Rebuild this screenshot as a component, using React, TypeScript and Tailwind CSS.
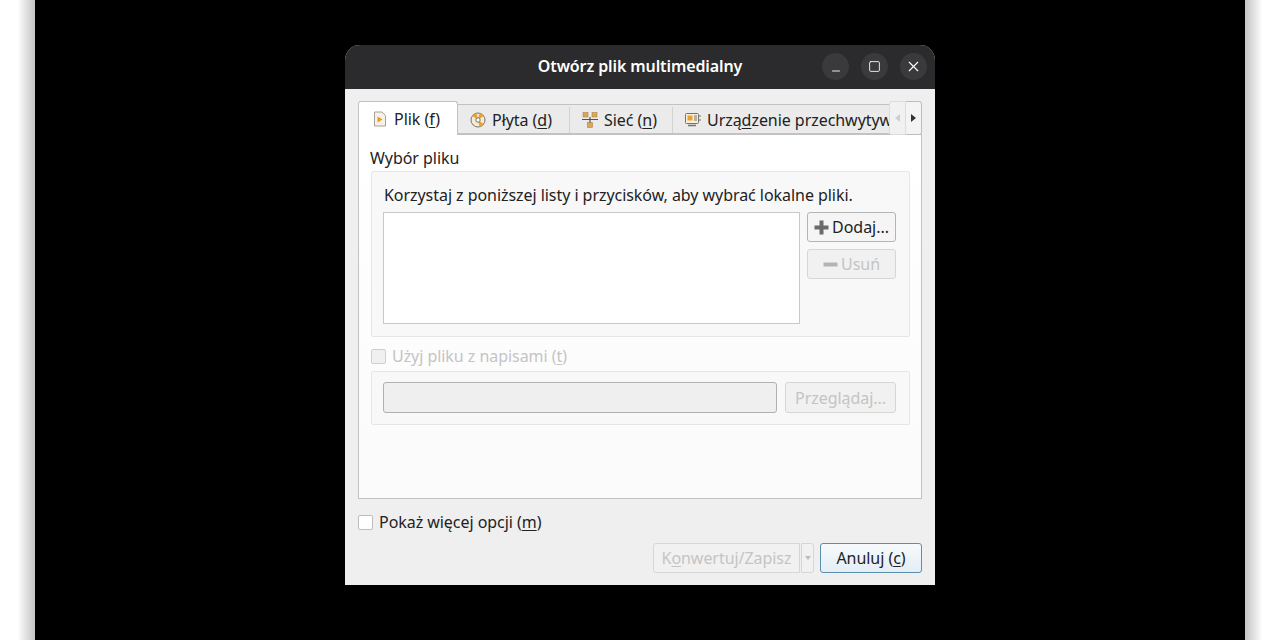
import React from 'react';
import { Minus as MinimizeIcon, Square, X } from 'lucide-react';

const FileIcon = () => (
  <svg width="15" height="16" viewBox="0 0 15 16" className="shrink-0">
    <path d="M1.5 1h7.5l3.5 3.5V15h-11z" fill="#f6f1e6" stroke="#a8a296" />
    <path d="M4.5 5.5l5 3-5 3z" fill="#e8991f" />
  </svg>
);

const DiscIcon = () => (
  <svg width="16" height="16" viewBox="0 0 16 16" className="shrink-0">
    <circle cx="8" cy="8" r="7" fill="#f6ead2" stroke="#77716a" />
    <path d="M8 8L2.5 4A7 7 0 0 1 6.5 1.2zM8 8l5.5 4A7 7 0 0 1 9.5 14.8z" fill="#e8a32e" />
    <path d="M8 8L13.5 4A7 7 0 0 0 9.5 1.2z" fill="#e8a32e" />
    <circle cx="8" cy="8" r="2.2" fill="#fff" stroke="#77716a" />
  </svg>
);

const NetworkIcon = () => (
  <svg width="16" height="16" viewBox="0 0 16 16" className="shrink-0">
    <rect x="1" y="0.5" width="5" height="4.5" fill="#dda653" stroke="#a5793a" strokeWidth="0.5" />
    <rect x="10" y="0.5" width="5" height="4.5" fill="#dda653" stroke="#a5793a" strokeWidth="0.5" />
    <rect x="5.5" y="10.5" width="5" height="5" fill="#dda653" stroke="#a5793a" strokeWidth="0.5" />
    <path d="M0 7.5h16M8 5v5.5" stroke="#55524c" strokeWidth="1.2" />
  </svg>
);

const CaptureIcon = () => (
  <svg width="16" height="16" viewBox="0 0 16 16" className="shrink-0">
    <rect x="0.5" y="1.5" width="13" height="10" rx="1" fill="#f7efdc" stroke="#77716a" />
    <rect x="2.5" y="3.5" width="5" height="5" fill="#e8a32e" />
    <path d="M9 4h3M9 6h3M9 8h3" stroke="#77716a" />
    <path d="M3 13.5h8" stroke="#77716a" strokeWidth="1.5" />
    <path d="M15 3v2M15 7v2" stroke="#77716a" />
  </svg>
);

const PlusIcon = () => (
  <svg width="15" height="15" viewBox="0 0 15 15" className="shrink-0">
    <path d="M5.5 0.5h4v5h5v4h-5v5h-4v-5h-5v-4h5z" fill="#6a6a6a" />
  </svg>
);

const MinusIcon = () => (
  <svg width="15" height="15" viewBox="0 0 15 15" className="shrink-0">
    <path d="M0.5 5.5h14v4h-14z" fill="#b4b4b4" />
  </svg>
);

// one underlined mnemonic letter, like Qt draws it
const Key = ({ children }: { children: React.ReactNode }) => (
  <span className="underline underline-offset-2 decoration-1">{children}</span>
);

const TabLabel = ({ icon, children }: { icon: React.ReactNode; children: React.ReactNode }) => (
  <span className="flex items-center whitespace-nowrap">
    {icon}
    <span className="ml-[6px]">{children}</span>
  </span>
);

const TabBar = () => (
  <div className="flex h-[34px] items-stretch relative z-10 -mb-px">
    <div className="w-[100px] rounded-t-[3px] border border-b-0 border-[#c2c2c2] bg-white pl-[14px] flex items-center">
      <TabLabel icon={<FileIcon />}>Plik (<Key>f</Key>)</TabLabel>
    </div>
    <div className="mt-[3px] mb-px pt-[2px] flex flex-1 min-w-0 overflow-hidden border-t border-b border-[#c2c2c2] bg-[#ebebeb] text-[#222]">
      <div className="w-[112px] shrink-0 border-r border-[#d2d2d2] pl-[12px] flex items-center">
        <TabLabel icon={<DiscIcon />}>Płyta (<Key>d</Key>)</TabLabel>
      </div>
      <div className="w-[103px] shrink-0 border-r border-[#d2d2d2] pl-[12px] flex items-center">
        <TabLabel icon={<NetworkIcon />}>Sieć (<Key>n</Key>)</TabLabel>
      </div>
      <div className="shrink-0 pl-[12px] flex items-center">
        <TabLabel icon={<CaptureIcon />}>Urzą<Key>d</Key>zenie przechwytywania</TabLabel>
      </div>
    </div>
    <div className="w-[17px] shrink-0 rounded-l-[3px] border border-[#dcdcdc] bg-[#f1f1f1] flex items-center justify-center">
      <span className="h-0 w-0 border-y-[4px] border-y-transparent border-r-[5px] border-r-[#cfcfcf]" />
    </div>
    <div className="w-[16px] shrink-0 rounded-r-[3px] border border-l-0 border-[#bdbdbd] bg-[#f4f4f4] flex items-center justify-center">
      <span className="h-0 w-0 border-y-[4px] border-y-transparent border-l-[5px] border-l-[#333]" />
    </div>
  </div>
);

const WindowButton = ({ children }: { children: React.ReactNode }) => (
  <div className="w-[27px] h-[27px] rounded-full bg-[#3a3a3c] flex items-center justify-center text-white">
    {children}
  </div>
);

export default function App() {
  return (
    <div
      className="h-[640px] w-[1280px] overflow-hidden flex bg-white text-[16px] tracking-[-0.05px] text-[#222]"
      style={{ fontFamily: '"Noto Sans", "Open Sans", sans-serif' }}
    >
      <div className="w-[35px] shrink-0 bg-gradient-to-r from-white from-50% to-[#c4c4c4]" />
      <div className="flex-1 bg-black flex justify-center pt-[45px]">
        <div className="w-[590px] h-[540px] rounded-t-[15px] overflow-hidden bg-[#efefef] flex flex-col">
          {/* Title bar */}
          <div className="h-[44px] shrink-0 bg-[#2b2b2d] relative flex items-center justify-center">
            <span className="font-semibold text-white text-[16px] tracking-[-0.1px] -mt-[2px]">Otwórz plik multimedialny</span>
            <div className="absolute right-[8px] top-[8px] flex gap-[12px]">
              <WindowButton><MinimizeIcon size={12} strokeWidth={1.8} className="mt-[8px]" /></WindowButton>
              <WindowButton><Square size={13} strokeWidth={1.6} /></WindowButton>
              <WindowButton><X size={17} strokeWidth={1.6} /></WindowButton>
            </div>
          </div>

          <div className="flex-1 flex flex-col px-[13px] pt-[12px] pb-[13px]">
            <TabBar />

            {/* Tab page */}
            <div className="h-[365px] shrink-0 border border-[#c2c2c2] pl-[12px] pr-[11px] pt-[13px] bg-gradient-to-b from-white to-[#fbfbfb]">
              <div className="leading-[20px] ml-[-1px]">Wybór pliku</div>
              <div className="mt-[3px] h-[166px] rounded-[2px] border border-[#e6e6e6] bg-[#f8f8f8] px-[11px] pt-[13px]">
                <div className="leading-[20px] pl-px">Korzystaj z poniższej listy i przycisków, aby wybrać lokalne pliki.</div>
                <div className="mt-[7px] flex gap-[7px]">
                  <div className="w-[417px] h-[112px] border border-[#c8c8c8] bg-white" />
                  <div className="w-[89px] flex flex-col gap-[7px]">
                    <button className="h-[30px] rounded-[3px] border border-[#b4b4b4] bg-[#f5f5f5] flex items-center justify-center gap-[3px]">
                      <PlusIcon />
                      Dodaj...
                    </button>
                    <button className="h-[30px] rounded-[3px] border border-[#d6d6d6] bg-[#f1f1f1] flex items-center justify-center gap-[3px] text-[#c4c4c4]">
                      <MinusIcon />
                      Usuń
                    </button>
                  </div>
                </div>
              </div>

              <div className="mt-[9px] flex items-center gap-[6px] h-[20px] text-[#c4c4c4]">
                <span className="w-[15px] h-[15px] rounded-[2px] border border-[#cfcfcf] bg-[#f0f0f0]" />
                <span>Użyj pliku z napisami (<Key>t</Key>)</span>
              </div>
              <div className="mt-[5px] h-[54px] rounded-[2px] border border-[#e6e6e6] bg-[#f8f8f8] pl-[11px] pt-[10px] flex gap-[8px]">
                <div className="w-[394px] h-[31px] rounded-[3px] border border-[#b0b0b0] bg-[#efefef]" />
                <button className="w-[111px] h-[31px] rounded-[3px] border border-[#d6d6d6] bg-[#f1f1f1] text-[#c4c4c4]">
                  Przeglądaj...
                </button>
              </div>
            </div>

            {/* Footer */}
            <div className="mt-[13px] flex items-center gap-[6px] h-[20px]">
              <span className="w-[15px] h-[15px] rounded-[2px] border border-[#bdbdbd] bg-white" />
              <span>Pokaż więcej opcji (<Key>m</Key>)</span>
            </div>
            <div className="mt-[11px] flex justify-end">
              <button className="w-[147px] h-[30px] rounded-l-[3px] border border-[#d6d6d6] bg-[#f1f1f1] text-[#c4c4c4]">
                K<Key>o</Key>nwertuj/Zapisz
              </button>
              <button className="ml-px w-[13px] h-[30px] rounded-r-[3px] border border-[#d6d6d6] bg-[#f1f1f1] flex items-center justify-center">
                <span className="h-0 w-0 border-x-[3px] border-x-transparent border-t-[4px] border-t-[#bbb]" />
              </button>
              <button className="ml-[6px] w-[102px] h-[30px] rounded-[3px] border border-[#5c8eb0] bg-gradient-to-b from-[#f7fafc] to-[#e3eef5]">
                Anuluj (<Key>c</Key>)
              </button>
            </div>
          </div>
        </div>
      </div>
      <div className="w-[35px] shrink-0 bg-gradient-to-l from-white from-50% to-[#c4c4c4]" />
    </div>
  );
}
